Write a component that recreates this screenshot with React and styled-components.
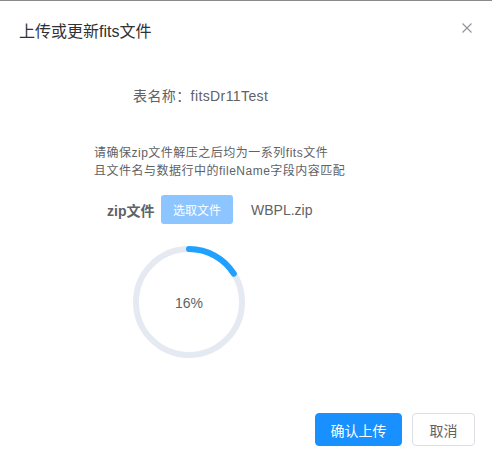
import React from "react";
import styled, { createGlobalStyle } from "styled-components";

const Global = createGlobalStyle`
  html, body { margin: 0; padding: 0; background: #fff; }
  body { font-family: "Liberation Sans", "Noto Sans CJK SC", sans-serif; }
  * { box-sizing: border-box; }
`;

const Dialog = styled.div`
  width: 492px;
  height: 462px;
  border-top: 1px solid #8a8a8a;
  background: #fff;
  display: flex;
  flex-direction: column;
`;

const Header = styled.div`
  display: flex;
  justify-content: space-between;
  align-items: flex-start;
  padding: 19px 20px 0 19px;
`;

const Title = styled.span`
  font-size: 16px;
  line-height: 24px;
  color: #303133;
`;

const Close = styled.button`
  border: none;
  background: none;
  padding: 0;
  margin-top: 3px;
  width: 10px;
  height: 10px;
  display: flex;
  cursor: pointer;
`;

const Body = styled.div`
  display: flex;
  flex-direction: column;
  align-items: flex-start;
`;

const Line = styled.div`
  margin-left: ${(p) => p.$left}px;
  margin-top: ${(p) => p.$top}px;
  font-size: ${(p) => p.$size || 14}px;
  line-height: ${(p) => p.$lh || 20}px;
  letter-spacing: ${(p) => p.$ls || 0}px;
  color: #606266;
`;

const Row = styled.div`
  display: flex;
  align-items: center;
  margin-left: 107px;
  margin-top: 15px;
  height: 29px;
`;

const Label = styled.span`
  font-size: 14px;
  font-weight: bold;
  color: #606266;
  width: 54px;
`;

const PickButton = styled.button`
  width: 72px;
  height: 29px;
  border: none;
  border-radius: 3px;
  background: #8cc5ff;
  color: #fff;
  font-family: inherit;
  font-size: 12px;
  padding: 0;
  cursor: not-allowed;
`;

const FileName = styled.span`
  margin-left: 18px;
  font-size: 14px;
  color: #606266;
`;

const CircleWrap = styled.div`
  position: relative;
  margin-left: 133px;
  margin-top: 22px;
  width: 112px;
  height: 112px;
`;

const CircleText = styled.div`
  position: absolute;
  inset: 0;
  display: flex;
  align-items: center;
  justify-content: center;
  font-size: 14px;
  color: #606266;
  padding-top: 2px;
`;

const Footer = styled.div`
  margin-top: auto;
  display: flex;
  justify-content: flex-end;
  gap: 10px;
  padding: 0 17px 16px 0;
`;

const Btn = styled.button`
  height: 33px;
  padding: 0 ${(p) => (p.$primary ? 14.5 : 16.5)}px;
  border-radius: 4px;
  border: 1px solid ${(p) => (p.$primary ? "#1890ff" : "#dcdfe6")};
  background: ${(p) => (p.$primary ? "#1890ff" : "#fff")};
  color: ${(p) => (p.$primary ? "#fff" : "#606266")};
  font-family: inherit;
  font-size: 14px;
  cursor: pointer;
`;

function Progress({ percent }) {
  const r = 53;
  const c = 2 * Math.PI * r;
  return (
    <CircleWrap>
      <svg width="112" height="112" viewBox="0 0 112 112">
        <circle cx="56" cy="56" r={r} fill="none" stroke="#e5e9f2" strokeWidth="6" />
        <circle
          cx="56"
          cy="56"
          r={r}
          fill="none"
          stroke="#20a0ff"
          strokeWidth="6"
          strokeLinecap="round"
          strokeDasharray={`${(c * percent) / 100} ${c}`}
          transform="rotate(-90 56 56)"
        />
      </svg>
      <CircleText>{percent}%</CircleText>
    </CircleWrap>
  );
}

export default function App() {
  return (
    <>
      <Global />
      <Dialog>
        <Header>
          <Title>上传或更新fits文件</Title>
          <Close aria-label="close">
            <svg width="10" height="10" viewBox="0 0 10 10">
              <path d="M0.5 0.5L9.5 9.5M9.5 0.5L0.5 9.5" stroke="#909399" strokeWidth="1.1" />
            </svg>
          </Close>
        </Header>
        <Body>
          <Line $left={133} $top={42} $ls={0.4}>表名称：fitsDr11Test</Line>
          <Line $left={94} $top={38} $size={12} $lh={18} $ls={0.5}>
            请确保zip文件解压之后均为一系列fits文件
            <br />
            且文件名与数据行中的fileName字段内容匹配
          </Line>
          <Row>
            <Label>zip文件</Label>
            <PickButton disabled>选取文件</PickButton>
            <FileName>WBPL.zip</FileName>
          </Row>
          <Progress percent={16} />
        </Body>
        <Footer>
          <Btn $primary>确认上传</Btn>
          <Btn>取消</Btn>
        </Footer>
      </Dialog>
    </>
  );
}
